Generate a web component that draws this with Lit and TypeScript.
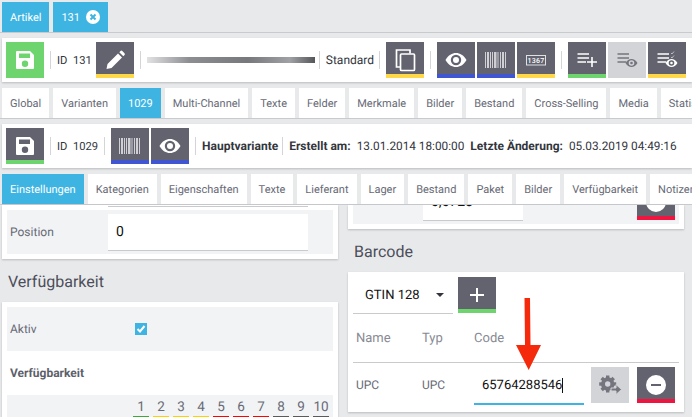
import { LitElement, html, css, svg } from "lit";
import { customElement } from "lit/decorators.js";

const floppy = svg`<path fill="currentColor" d="M4 3h13l4 4v13a1 1 0 0 1-1 1H4a1 1 0 0 1-1-1V4a1 1 0 0 1 1-1zm2 2.500v4.500h11V5.500zM12 12.500a3.200 3.200 0 1 0 0 6.400a3.200 3.200 0 0 0 0-6.400z" fill-rule="evenodd"/>`;
const pencil = svg`<path fill="currentColor" d="M3.500 21l1-5L15 5.500l4 4L8.500 20zM16.300 4.200l1.200-1.200a1.300 1.300 0 0 1 1.800 0l2.200 2.200a1.300 1.300 0 0 1 0 1.800l-1.200 1.200z"/>`;
const copy = svg`<g fill="none" stroke="currentColor" stroke-width="1.700"><path d="M7 19H3.500V2H17v3.500"/><rect x="7.500" y="6" width="14" height="16.500" rx="1"/></g>`;
const eye = svg`<path fill="currentColor" fill-rule="evenodd" d="M1.500 12C4.500 7 8 5 12 5s7.500 2 10.500 7c-3 5-6.500 7-10.500 7s-7.500-2-10.500-7zM12 6.800a5.200 5.200 0 1 0 0 10.400 5.200 5.200 0 0 0 0-10.400zm0 2.200a3 3 0 1 1 0 6 3 3 0 0 1 0-6z"/>`;
const barcode = svg`<g fill="currentColor" opacity=".7"><rect x="1" y="4" width="1" height="16"/><rect x="3" y="4" width="2" height="16"/><rect x="6" y="4" width="1" height="16"/><rect x="8" y="4" width="1" height="16"/><rect x="10" y="4" width="2.500" height="16"/><rect x="13.500" y="4" width="1" height="16"/><rect x="16" y="4" width="1" height="16"/><rect x="18" y="4" width="2" height="16"/><rect x="21" y="4" width="1" height="16"/></g>`;
const numbered = svg`<rect x="2.500" y="7.500" width="19" height="9.500" fill="none" stroke="currentColor" stroke-width="1" opacity=".8"/><text x="12" y="15" text-anchor="middle" font-family="Roboto, sans-serif" font-size="7" font-weight="500" letter-spacing=".3" fill="currentColor">1367</text>`;
const listLines = svg`<path fill="currentColor" d="M2.500 5.200h11.500v1.600H2.500zM2.500 9.200h11.500v1.600H2.500zM2.500 13.200h8.500v1.600H2.500z"/>`;
const listPlus = svg`${listLines}<path fill="currentColor" d="M16.200 9h1.600v4.200H22v1.600h-4.200V19h-1.600v-4.200H12v-1.600h4.200z"/>`;
const eyeSmall = svg`<path fill="currentColor" fill-rule="evenodd" d="M10.500 15c1.500-2.500 3.700-4 6-4s4.500 1.500 6 4c-1.500 2.500-3.700 4-6 4s-4.500-1.500-6-4zm6-2.800a2.800 2.800 0 1 0 0 5.600 2.800 2.800 0 0 0 0-5.600zm0 1.500a1.300 1.300 0 1 1 0 2.600 1.300 1.300 0 0 1 0-2.600z"/>`;
const listEye = svg`${listLines}${eyeSmall}`;
const listCheckEye = svg`${listLines}${eyeSmall}<path fill="none" stroke="currentColor" stroke-width=".8" opacity=".7" d="M16 5l1 1 2-2.500M16 9l1 1 2-2.500"/>`;
const plus = svg`<path fill="currentColor" d="M11 5h2v6h6v2h-6v6h-2v-6H5v-2h6z"/>`;
const minusCircle = svg`<path fill="currentColor" fill-rule="evenodd" d="M12 2a10 10 0 1 1 0 20 10 10 0 0 1 0-20zM7 11v2h10v-2z"/>`;
const teeth = [0, 45, 90, 135].map(
  (a) => svg`<rect x="8" y="2.500" width="3.400" height="17" fill="currentColor" transform="rotate(${a} 9.700 11)"/>`,
);
const gearArrow = svg`${teeth}<circle cx="9.700" cy="11" r="4.700" fill="none" stroke="currentColor" stroke-width="4"/><circle cx="9.700" cy="11" r="2.700" fill="#d3d4d7"/><path fill="currentColor" stroke="#d3d4d7" stroke-width="1" d="M13 15h5v-3.500l5.500 5-5.500 5V18h-5z"/>`;

const availColors = ["#3aa935", "#ffd000", "#ffd000", "#ffd000", "#f00", "#f00", "#f00", "#5a5a5a", "#5a5a5a", "#5a5a5a"];

@customElement("app-root")
export class AppRoot extends LitElement {
  static styles = css`
    :host {
      display: block;
      width: 692px;
      height: 417px;
      overflow: hidden;
      background: #e8e9eb;
      font-family: Roboto, "Liberation Sans", sans-serif;
      font-size: 12px;
      color: #33353d;
      text-rendering: geometricPrecision;
    }
    .tabs {
      display: flex;
      gap: 4px;
      height: 30px;
      padding-left: 2px;
      overflow: hidden;
      border-bottom: 1px solid #c9cacd;
    }
    .tabs.top {
      padding-top: 2px;
    }
    .tab {
      flex: none;
      display: flex;
      align-items: center;
      gap: 6px;
      padding: 0 8px;
      background: #fff;
      color: #676a76;
      font-size: 11px;
    }
    .tab.on {
      background: #3eb4e2;
      color: #fff;
    }
    .close {
      width: 14px;
      height: 14px;
    }
    .toolbar {
      display: flex;
      align-items: center;
      height: 44px;
      margin: 5px 0 6px 2px;
      padding-left: 4px;
      overflow: hidden;
      background: #fff;
      box-shadow: 0 1px 2px rgba(0, 0, 0, 0.2);
      white-space: nowrap;
    }
    .btn {
      flex: none;
      display: flex;
      align-items: center;
      justify-content: center;
      box-sizing: border-box;
      width: 38px;
      height: 36px;
      padding-top: 4px;
      background: #62636f;
      color: #fff;
      border-bottom: 4px solid transparent;
    }
    .btn svg {
      width: 24px;
      height: 24px;
    }
    .btn + .btn {
      margin-left: 2px;
    }
    .btn.green-fill {
      background: #6dd46e;
      border-color: #6dd46e;
    }
    .btn.muted {
      padding-top: 0;
      background: #d3d4d7;
      color: #74757e;
      border-bottom: 0;
    }
    .yellow {
      border-bottom-color: #ffd84a;
    }
    .blue {
      border-bottom-color: #3f55d2;
    }
    .green {
      border-bottom-color: #6dd46e;
    }
    .red {
      border-bottom-color: #f01440;
    }
    .sep {
      flex: none;
      width: 1px;
      height: 18px;
      margin: 0 6px;
      background: #d4d5d7;
    }
    .sep.tight {
      margin-left: 4px;
    }
    .sep.close-right {
      margin-left: 5px;
    }
    .item {
      flex: none;
    }
    .item.id {
      font-size: 11.2px;
    }
    .item.gap {
      margin-right: 4px;
    }
    .smudge {
      flex: none;
      width: 168px;
      height: 6px;
      background: linear-gradient(90deg, #e2e2e4, #8d8e92 25%, #77787c 60%, #a0a1a5 85%, #55565a);
      filter: blur(0.7px);
    }
    b {
      font-weight: 700;
    }
    .meta {
      flex: none;
      display: flex;
      gap: 6px;
    }
    .meta span {
      font-size: 11.8px;
    }
    .columns {
      display: grid;
      grid-template-columns: 336px 336px;
      gap: 10px;
      padding-left: 2px;
    }
    .panel {
      box-sizing: border-box;
      padding: 5px;
      background: #fff;
      box-shadow: 0 1px 2px rgba(0, 0, 0, 0.2);
    }
    .panel.cut {
      padding-top: 0;
    }
    .stub {
      box-sizing: border-box;
      width: 200px;
      height: 2px;
      margin: 0 0 3px 101px;
      border-bottom: 1px solid #c9cacd;
    }
    .row {
      display: flex;
      align-items: center;
      height: 44px;
      background: #f2f3f5;
      color: #676a76;
    }
    .label {
      box-sizing: border-box;
      width: 101px;
      padding-left: 3px;
    }
    .label.wide {
      width: 128px;
    }
    .input {
      box-sizing: border-box;
      width: 200px;
      height: 37px;
      margin-top: 1px;
      padding: 0 8px;
      display: flex;
      align-items: center;
      background: #fff;
      border-bottom: 1px solid #c9cacd;
      color: #111;
      font-size: 14px;
    }
    h2 {
      height: 43px;
      margin: 0;
      padding-left: 6px;
      font-size: 16px;
      font-weight: 400;
      line-height: 46px;
      color: #4c4e5a;
    }
    .check {
      display: flex;
      align-items: center;
      justify-content: center;
      width: 12px;
      height: 12px;
      background: #3eb4e2;
      color: #fff;
    }
    .check svg {
      width: 10px;
      height: 10px;
    }
    .sub {
      height: 44px;
      padding-left: 3px;
      font-weight: 700;
      line-height: 44px;
      color: #5d5f6b;
    }
    .avail {
      display: flex;
      justify-content: flex-end;
      gap: 4px;
      height: 40px;
      padding: 0 4px;
      background: #f2f3f5;
    }
    .avail span {
      box-sizing: border-box;
      width: 16px;
      height: 23px;
      padding-top: 4px;
      line-height: 16px;
      font-size: 13.5px;
      text-align: center;
      color: #676a76;
      border-bottom: 2px solid #5a5a5a;
    }
    .clip {
      display: flex;
      align-items: flex-end;
      height: 19px;
      overflow: hidden;
      background: #f2f3f5;
      color: #676a76;
    }
    .clip .val {
      box-sizing: border-box;
      flex: none;
      display: flex;
      align-items: center;
      width: 100px;
      height: 37px;
      margin: 0 0 3px 70px;
      padding: 0 8px;
      background: #fff;
      border-bottom: 1px solid #c9cacd;
      color: #111;
      font-size: 14px;
    }
    .clip .btn {
      margin: 0 4px 4px auto;
    }
    .adder {
      display: flex;
      align-items: flex-start;
      gap: 5px;
    }
    .select {
      box-sizing: border-box;
      display: flex;
      align-items: center;
      justify-content: space-between;
      width: 100px;
      height: 37px;
      padding: 0 9px 0 12px;
      border-bottom: 1px solid #c9cacd;
      color: #111;
      font-size: 13px;
    }
    .caret {
      width: 0;
      height: 0;
      border: 4px solid transparent;
      border-top-color: #33353d;
      border-bottom-width: 0;
    }
    .head,
    .line {
      display: grid;
      grid-template-columns: 66px 52px 1fr;
      padding-left: 3px;
      color: #888a94;
    }
    .head {
      height: 49px;
      align-items: end;
      padding-bottom: 16px;
      box-sizing: border-box;
      font-size: 13px;
      border-bottom: 1px solid #c9cacd;
    }
    .line {
      grid-template-columns: 66px 52px 110px 45px 46px;
      height: 45px;
      align-items: start;
      color: #676a76;
      padding-top: 4px;
      box-sizing: border-box;
    }
    .line .txt {
      height: 36px;
      line-height: 36px;
    }
    .code {
      box-sizing: border-box;
      display: flex;
      align-items: center;
      height: 38px;
      padding-left: 8px;
      border-bottom: 2px solid #3eb4e2;
      color: #111;
      font-size: 13px;
    }
    .cursor {
      width: 1px;
      height: 15px;
      background: #111;
    }
    .line .btn {
      justify-self: end;
    }
    .barcode-panel {
      position: relative;
      height: 140px;
    }
    .arrow {
      position: absolute;
      left: 168px;
      top: 26px;
      width: 25px;
      height: 72px;
    }
  `;

  icon(content: unknown) {
    return html`<svg viewBox="0 0 24 24">${content}</svg>`;
  }

  renderTabs(labels: string[], active: string) {
    return html`<div class="tabs">
      ${labels.map(
        (l) => html`<div class="tab ${l === active ? "on" : ""}">${l}</div>`,
      )}
    </div>`;
  }

  render() {
    return html`
      <div class="tabs top">
        <div class="tab on">Artikel</div>
        <div class="tab on">
          131
          <svg class="close" viewBox="0 0 14 14">
            <circle cx="7" cy="7" r="7" fill="#fff" />
            <path d="M4.500 4.500l5 5M9.500 4.500l-5 5" stroke="#3eb4e2" stroke-width="2" />
          </svg>
        </div>
      </div>
      <div class="toolbar">
        <div class="btn green-fill">${this.icon(floppy)}</div>
        <div class="sep"></div>
        <div class="item id gap">ID&nbsp; 131</div>
        <div class="btn yellow">${this.icon(pencil)}</div>
        <div class="sep"></div>
        <div class="smudge"></div>
        <div class="sep tight"></div>
        <div class="item">Standard</div>
        <div class="sep close-right"></div>
        <div class="btn yellow">${this.icon(copy)}</div>
        <div class="sep"></div>
        <div class="btn blue">${this.icon(eye)}</div>
        <div class="btn blue">${this.icon(barcode)}</div>
        <div class="btn yellow">${this.icon(numbered)}</div>
        <div class="sep"></div>
        <div class="btn green">${this.icon(listPlus)}</div>
        <div class="btn muted">${this.icon(listEye)}</div>
        <div class="btn yellow">${this.icon(listCheckEye)}</div>
        <div class="sep"></div>
      </div>
      ${this.renderTabs(
        ["Global", "Varianten", "1029", "Multi-Channel", "Texte", "Felder", "Merkmale", "Bilder", "Bestand", "Cross-Selling", "Media", "Statistik"],
        "1029",
      )}
      <div class="toolbar">
        <div class="btn green">${this.icon(floppy)}</div>
        <div class="sep"></div>
        <div class="item id">ID&nbsp; 1029</div>
        <div class="sep"></div>
        <div class="btn blue">${this.icon(barcode)}</div>
        <div class="btn blue">${this.icon(eye)}</div>
        <div class="sep"></div>
        <div class="item"><b>Hauptvariante</b></div>
        <div class="sep tight"></div>
        <div class="meta">
          <b>Erstellt am:</b><span>13.01.2014 18:00:00</span>
          <b>Letzte Änderung:</b><span>05.03.2019 04:49:16</span>
        </div>
      </div>
      ${this.renderTabs(
        ["Einstellungen", "Kategorien", "Eigenschaften", "Texte", "Lieferant", "Lager", "Bestand", "Paket", "Bilder", "Verfügbarkeit", "Notizen"],
        "Einstellungen",
      )}
      <div class="columns">
        <div>
          <div class="panel cut">
            <div class="stub"></div>
            <div class="row">
              <div class="label">Position</div>
              <div class="input">0</div>
            </div>
          </div>
          <h2>Verfügbarkeit</h2>
          <div class="panel">
            <div class="row">
              <div class="label wide">Aktiv</div>
              <div class="check">
                <svg viewBox="0 0 10 10"><path d="M1.500 5l2.500 2.500 4.500-5.500" fill="none" stroke="currentColor" stroke-width="2" /></svg>
              </div>
            </div>
            <div class="sub">Verfügbarkeit</div>
            <div class="avail">
              ${availColors.map(
                (c, i) => html`<span style="border-bottom-color:${c}">${i + 1}</span>`,
              )}
            </div>
          </div>
        </div>
        <div>
          <div class="panel cut">
            <div class="clip">
              <div class="val">0,6723</div>
              <div class="btn red">${this.icon(minusCircle)}</div>
            </div>
          </div>
          <h2>Barcode</h2>
          <div class="panel barcode-panel">
            <div class="adder">
              <div class="select">GTIN 128<span class="caret"></span></div>
              <div class="btn green">${this.icon(plus)}</div>
            </div>
            <div class="head"><span>Name</span><span>Typ</span><span>Code</span></div>
            <div class="line">
              <span class="txt">UPC</span>
              <span class="txt">UPC</span>
              <div class="code">65764288546<span class="cursor"></span></div>
              <div class="btn muted">${this.icon(gearArrow)}</div>
              <div class="btn red">${this.icon(minusCircle)}</div>
            </div>
            <svg class="arrow" viewBox="0 0 25 72">
              <path fill="#f52a0c" d="M8.500 0H14l.5 47H25L12.700 72 0 47h9z" />
            </svg>
          </div>
        </div>
      </div>
    `;
  }
}
